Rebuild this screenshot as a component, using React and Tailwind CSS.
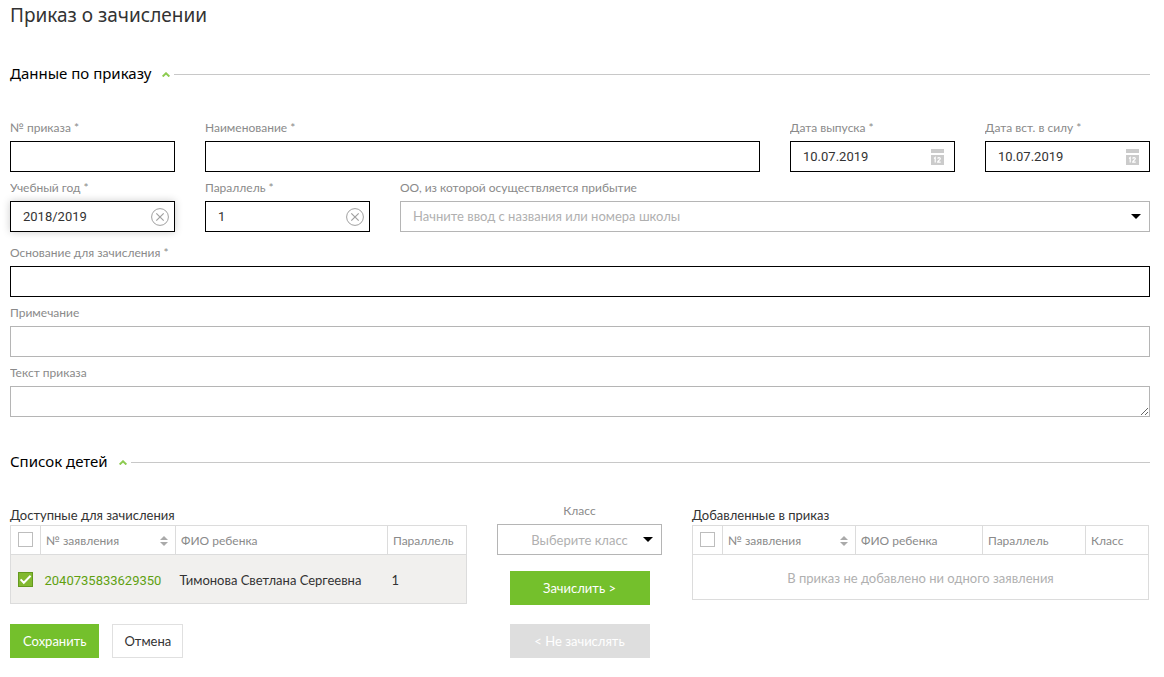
import { useState } from "react";

const boxBase = "flex h-[31px] w-full items-center border bg-white";

function Label({ htmlFor, center, children }) {
  return (
    <label
      htmlFor={htmlFor}
      className={`block truncate text-[12px] leading-[26px] text-[#8a8a8a] ${center ? "text-center" : ""}`}
    >
      {children}
    </label>
  );
}

function Field({ id, label, required, className = "", glow, children, ...input }) {
  return (
    <div className={className}>
      <Label htmlFor={id}>{required ? `${label} *` : label}</Label>
      <div
        className={`${boxBase} ${required ? "border-black" : "border-[#b5b5b5]"} ${glow ? "shadow-[0_0_8px_rgba(0,0,0,0.2)]" : ""}`}
      >
        <input
          id={id}
          type="text"
          className="h-full min-w-0 flex-1 bg-transparent pl-3 font-['Roboto','Noto_Sans',sans-serif] text-[13px] text-[#333] outline-none placeholder:font-['Lato','Noto_Sans',sans-serif] placeholder:text-[#b0b0b0]"
          {...input}
        />
        {children}
      </div>
    </div>
  );
}

function ClearButton() {
  return (
    <button type="button" aria-label="Очистить" className="mr-[5px] shrink-0">
      <svg width="18" height="18" viewBox="0 0 18 18" fill="none" stroke="#a0a0a0">
        <circle cx="9" cy="9" r="8.4" strokeWidth="1" />
        <path d="M5.3 5.3l7.4 7.4M12.7 5.3l-7.4 7.4" strokeWidth="1.2" />
      </svg>
    </button>
  );
}

function CalendarButton() {
  return (
    <button type="button" aria-label="Открыть календарь" className="mr-[10px] shrink-0">
      <svg width="13" height="16" viewBox="0 0 13 16">
        <path d="M0 0h13v4H0zM0 6h13v10H0z" fill="#cbcbcb" />
        <path d="M3 9.4l1.2-.9v5M6.7 9.6c.2-1.3 2.7-1.3 2.6.1 0 1-2.6 2.2-2.6 3.4h3" fill="none" stroke="#fff" strokeWidth="1.2" />
      </svg>
    </button>
  );
}

function Caret() {
  return (
    <svg width="10" height="5" viewBox="0 0 10 5">
      <path d="M0 0h10L5 5z" fill="#000" />
    </svg>
  );
}

function SectionTitle({ children }) {
  return (
    <div className="flex items-center">
      <h2 className="pb-[2px] font-['Noto_Sans',sans-serif] text-[15px] leading-[22px] text-black">{children}</h2>
      <button type="button" aria-label="Свернуть" className="ml-[11px] mr-1">
        <svg width="8" height="5" viewBox="0 0 8 5" fill="none" stroke="#8ccb4f" strokeWidth="2">
          <path d="M.6 4.5L4 1.3l3.4 3.2" />
        </svg>
      </button>
      <span className="h-px flex-1 bg-[#c8c8c8]" />
    </div>
  );
}

function Tick({ label, defaultChecked = false }) {
  const [checked, setChecked] = useState(defaultChecked);
  return (
    <span className="mx-auto grid size-[15px]">
      <input
        type="checkbox"
        aria-label={label}
        checked={checked}
        onChange={(e) => setChecked(e.target.checked)}
        className="col-start-1 row-start-1 size-[15px] appearance-none border border-[#bdbdbd] bg-white checked:border-[#64991f] checked:bg-[#82b92f]"
      />
      {checked && (
        <svg className="pointer-events-none col-start-1 row-start-1" width="15" height="15" viewBox="0 0 15 15" fill="none">
          <path d="M2.6 7.4l3.2 3.3 6.8-7" stroke="#fff" strokeWidth="2" />
        </svg>
      )}
    </span>
  );
}

function Th({ className = "pt-[2px]", children }) {
  return (
    <th className={`h-[29px] truncate border border-[#dcdcdc] px-[5px] text-left text-[12px] font-normal text-[#8a8a8a] ${className}`}>
      {children}
    </th>
  );
}

function SortHeader() {
  return (
    <button type="button" className="flex w-full items-center justify-between">
      № заявления
      <svg className="mr-[2px]" width="8" height="10" viewBox="0 0 8 10" fill="#aaa">
        <path d="M0 4l4-4 4 4zM0 6h8l-4 4z" />
      </svg>
    </button>
  );
}

export default function App() {
  return (
    <form className="min-h-screen bg-white pl-[10px] pr-[14px] pt-[3px] font-['Lato','Noto_Sans',sans-serif] text-[13px] text-[#333]">
      <h1 className="font-['Noto_Sans',sans-serif] text-[19px] leading-6 text-[#333]">Приказ о зачислении</h1>

      <section className="mt-[35px]">
        <SectionTitle>Данные по приказу</SectionTitle>
        <div className="mt-[29px] grid grid-cols-6 gap-x-[30px] gap-y-[3px]">
          <Field id="number" label="№ приказа" required />
          <Field id="name" label="Наименование" required className="col-span-3" />
          <Field id="issued" label="Дата выпуска" required defaultValue="10.07.2019">
            <CalendarButton />
          </Field>
          <Field id="effective" label="Дата вст. в силу" required defaultValue="10.07.2019">
            <CalendarButton />
          </Field>
          <Field id="year" label="Учебный год" required glow defaultValue="2018/2019">
            <ClearButton />
          </Field>
          <Field id="grade" label="Параллель" required defaultValue="1">
            <ClearButton />
          </Field>
          <Field
            id="school"
            label="ОО, из которой осуществляется прибытие"
            className="col-span-4"
            placeholder="Начните ввод с названия или номера школы"
          >
            <button type="button" aria-label="Показать список" className="mr-2">
              <Caret />
            </button>
          </Field>
        </div>
        <div className="mt-2 flex flex-col gap-[3px]">
          <Field id="basis" label="Основание для зачисления" required />
          <Field id="note" label="Примечание" />
          <div>
            <Label htmlFor="text">Текст приказа</Label>
            <textarea
              id="text"
              rows={1}
              className="block h-[31px] w-full resize-y border border-[#b5b5b5] px-3 py-1 outline-none"
            />
          </div>
        </div>
      </section>

      <section className="mt-[33px]">
        <SectionTitle>Список детей</SectionTitle>
        <div className="mt-6 grid grid-cols-[minmax(0,1fr)_165px_minmax(0,1fr)] gap-x-[30px] pr-px">
          <div className="pt-[7px]">
            <h3 className="leading-5">Доступные для зачисления</h3>
            <table className="w-full table-fixed border-collapse border border-[#dcdcdc]">
              <colgroup>
                <col className="w-[30px]" />
                <col className="w-[135px]" />
                <col />
                <col className="w-[79px]" />
              </colgroup>
              <thead>
                <tr>
                  <Th className="pb-[2px]"><Tick label="Выбрать все доступные" /></Th>
                  <Th><SortHeader /></Th>
                  <Th>ФИО ребенка</Th>
                  <Th>Параллель</Th>
                </tr>
              </thead>
              <tbody>
                <tr className="h-[49px] bg-[#f1f0ee]">
                  <td className="px-[5px]"><Tick label="Выбрать заявление" defaultChecked /></td>
                  <td className="px-1 pt-1"><a href="#application" className="font-['Roboto','Noto_Sans',sans-serif] text-[#60a010]">2040735833629350</a></td>
                  <td className="px-1 pt-1">Тимонова Светлана Сергеевна</td>
                  <td className="px-1 pt-1">1</td>
                </tr>
              </tbody>
            </table>
            <div className="mt-5 flex gap-[13px]">
              <button type="submit" className="h-[34px] bg-[#74c02c] px-[13px] pt-[2px] text-white">Сохранить</button>
              <button type="button" className="h-[34px] border border-[#e0e0e0] bg-white px-[11px] pt-[2px]">Отмена</button>
            </div>
          </div>

          <div>
            <Label htmlFor="class" center>Класс</Label>
            <div className="grid items-center">
              <select
                id="class"
                defaultValue=""
                className="col-start-1 row-start-1 h-[31px] w-full appearance-none border border-[#b5b5b5] bg-white px-3 pt-[2px] text-center text-[13px] text-[#b0b0b0] outline-none"
              >
                <option value="">Выберите класс</option>
              </select>
              <span className="pointer-events-none col-start-1 row-start-1 mr-[9px] justify-self-end">
                <Caret />
              </span>
            </div>
            <div className="mx-auto mt-4 flex w-[140px] flex-col gap-[19px]">
              <button type="button" className="h-[34px] bg-[#74c02c] pt-[2px] text-white">Зачислить &gt;</button>
              <button type="button" disabled className="h-[34px] bg-[#dedede] pt-[2px] text-white">&lt; Не зачислять</button>
            </div>
          </div>

          <div className="pt-[7px]">
            <h3 className="leading-5">Добавленные в приказ</h3>
            <table className="w-full table-fixed border-collapse border border-[#dcdcdc]">
              <colgroup>
                <col className="w-[30px]" />
                <col className="w-[133px]" />
                <col />
                <col className="w-[103px]" />
                <col className="w-[63px]" />
              </colgroup>
              <thead>
                <tr>
                  <Th className="pb-[2px]"><Tick label="Выбрать все добавленные" /></Th>
                  <Th><SortHeader /></Th>
                  <Th>ФИО ребенка</Th>
                  <Th>Параллель</Th>
                  <Th>Класс</Th>
                </tr>
              </thead>
              <tbody>
                <tr className="h-[45px]">
                  <td colSpan={5} className="pt-1 text-center text-[#b0b0b0]">В приказ не добавлено ни одного заявления</td>
                </tr>
              </tbody>
            </table>
          </div>
        </div>
      </section>
    </form>
  );
}
